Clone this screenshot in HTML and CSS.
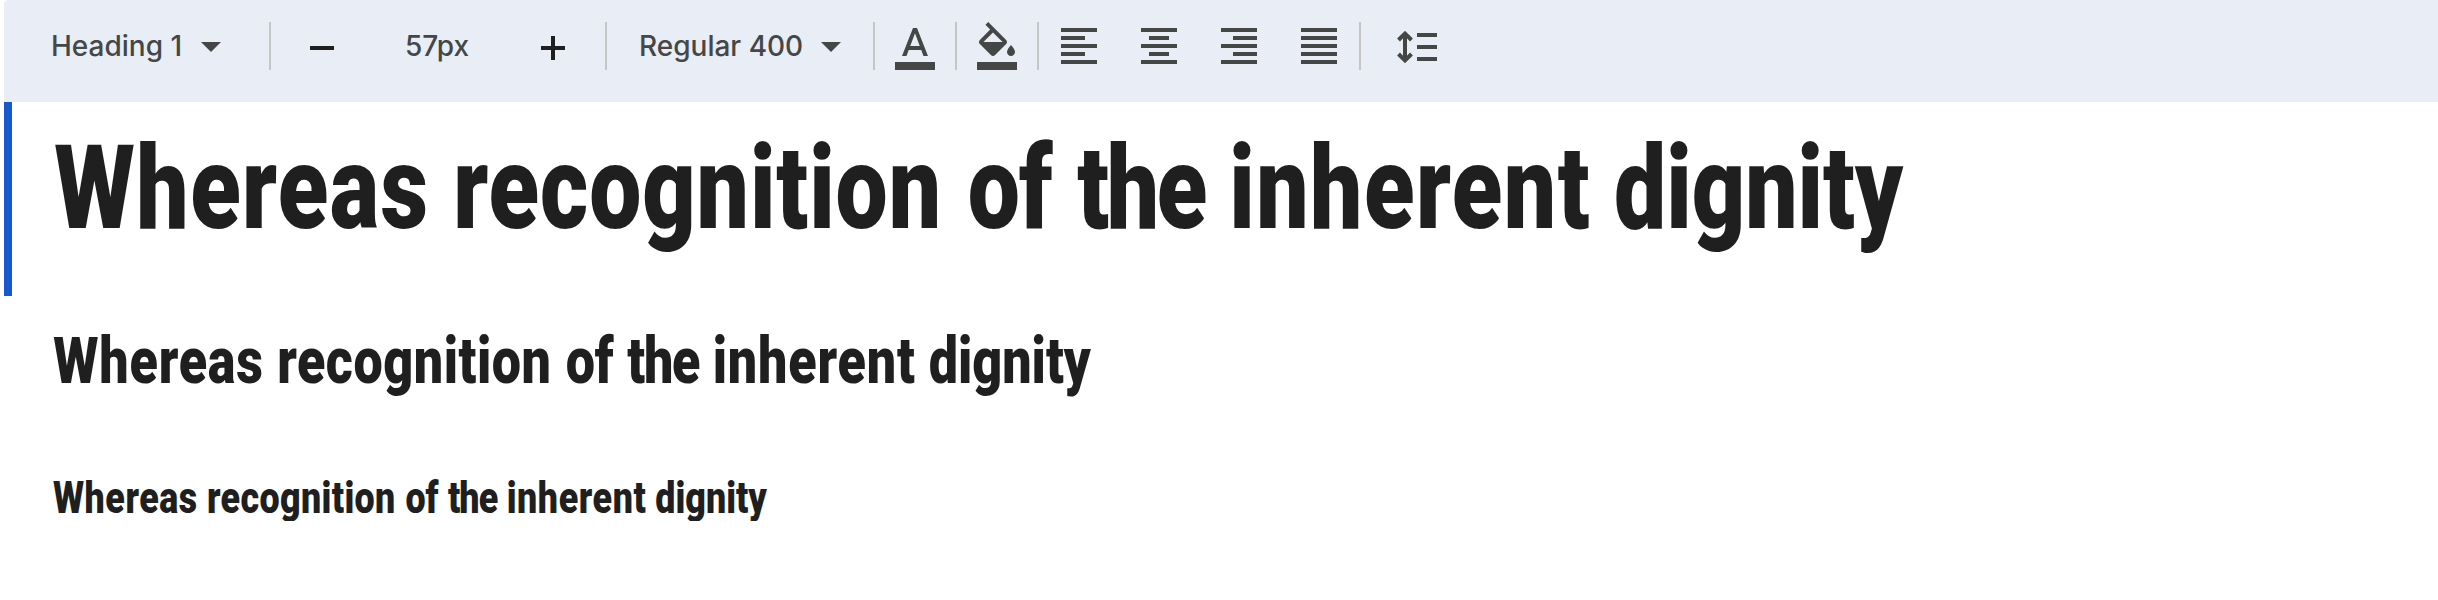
FILE: index.html
```
<!DOCTYPE html>
<html lang="en">
<head>
<meta charset="utf-8">
<title>Type tester</title>
<link rel="stylesheet" href="styles.css">
</head>
<body>
<div class="toolbar">
  <button class="select style-select"><span class="style-label">Heading 1</span><svg class="caret" viewBox="0 0 20 10"><path d="M0 0h20L10 10z"/></svg></button>
  <span class="divider"></span>
  <div class="stepper">
    <button class="step"><svg width="24" height="24" viewBox="0 0 24 24"><path d="M0 10h24v4H0z"/></svg></button>
    <span class="size">57px</span>
    <button class="step"><svg width="24" height="24" viewBox="0 0 24 24"><path d="M0 10h10V0h4v10h10v4H14v10h-4V14H0z"/></svg></button>
  </div>
  <span class="divider"></span>
  <button class="select weight-select"><span class="weight-label">Regular 400</span><svg class="caret" viewBox="0 0 20 10"><path d="M0 0h20L10 10z"/></svg></button>
  <span class="divider"></span>
  <button class="tool"><svg class="icon" viewBox="0 0 24 24"><path d="M2 20h20v4H2z"/><path d="M11 3L5.5 17h2.25l1.12-3h6.25l1.12 3h2.25L13 3h-2zm-1.38 9L12 5.67 14.38 12H9.62z"/></svg></button>
  <span class="divider"></span>
  <button class="tool"><svg class="icon" viewBox="0 0 24 24"><path d="M2 20h20v4H2z"/><path d="M16.56 8.94L7.62 0 6.21 1.41l2.38 2.38-5.15 5.15c-.59.59-.59 1.54 0 2.12l5.5 5.5c.29.29.68.44 1.06.44s.77-.15 1.06-.44l5.5-5.5c.59-.58.59-1.53 0-2.12zM5.21 10L10 5.21 14.79 10H5.21zM19 11.5s-2 2.17-2 3.5c0 1.1.9 2 2 2s2-.9 2-2c0-1.33-2-3.5-2-3.5z"/></svg></button>
  <span class="divider"></span>
  <div class="aligns">
    <button class="plain"><svg class="icon" viewBox="0 0 24 24"><path d="M3 3h18v2H3zM3 7h12v2H3zM3 11h18v2H3zM3 15h12v2H3zM3 19h18v2H3z"/></svg></button>
    <button class="plain"><svg class="icon" viewBox="0 0 24 24"><path d="M3 3h18v2H3zM7 7h10v2H7zM3 11h18v2H3zM7 15h10v2H7zM3 19h18v2H3z"/></svg></button>
    <button class="plain"><svg class="icon" viewBox="0 0 24 24"><path d="M3 3h18v2H3zM9 7h12v2H9zM3 11h18v2H3zM9 15h12v2H9zM3 19h18v2H3z"/></svg></button>
    <button class="plain"><svg class="icon" viewBox="0 0 24 24"><path d="M3 3h18v2H3zM3 7h18v2H3zM3 11h18v2H3zM3 15h18v2H3zM3 19h18v2H3z"/></svg></button>
  </div>
  <span class="divider"></span>
  <button class="plain spacing"><svg width="40" height="32" viewBox="0 0 40 32"><path d="M20 2h20v4H20zM20 14h20v4H20zM20 26h20v4H20zM6 4h4v24H6z"/><path class="chevron" d="M1.5 9L8 2.6 14.5 9M1.5 23L8 29.4 14.5 23"/></svg></button>
</div>
<main>
  <section class="sample large active"><h1 class="line"><span class="w1">Whereas</span> <span class="w2">recognition</span> <span class="w3">of</span> <span class="w4">the</span> <span class="w5">inherent</span> <span class="w6">dignity</span></h1></section>
  <section class="sample medium"><h2 class="line"><span class="w1">Whereas</span> <span class="w2">recognition</span> <span class="w3">of</span> <span class="w4">the</span> <span class="w5">inherent</span> <span class="w6">dignity</span></h2></section>
  <section class="sample small"><h3 class="line"><span class="w1">Whereas</span> <span class="w2">recognition</span> <span class="w3">of</span> <span class="w4">the</span> <span class="w5">inherent</span> <span class="w6">dignity</span></h3></section>
</main>
</body>
</html>
```
FILE: styles.css
```
* { box-sizing: border-box; }
body { margin: 0; background: #fff; color: #1f1f1f; font-family: Inter, "Liberation Sans", sans-serif; overflow: hidden; }
button { margin: 0; padding: 0; border: 0; background: none; color: inherit; font: inherit; letter-spacing: inherit; }
svg { display: block; fill: currentColor; }

.toolbar { display: flex; align-items: center; height: 102px; margin-left: 4px; padding-bottom: 10px; background: #e9edf6; border-top-left-radius: 4px; color: #444746; font-size: 28px; font-weight: 500; line-height: 40px; white-space: nowrap; }
.divider { flex: none; width: 2px; height: 48px; background: #c4c7c5; }
.select { display: flex; align-items: center; text-align: left; }
.style-select { width: 265px; padding-left: 47px; }
.style-label { width: 150px; letter-spacing: 0; }
.weight-select { width: 266px; padding-left: 32px; }
.weight-label { width: 182px; letter-spacing: 0; }
.caret { width: 20px; height: 10px; margin-top: 2px; }
.stepper { display: flex; align-items: center; width: 334px; padding-left: 39px; }
.step { color: #1f1f1f; padding-top: 4px; }
.size { width: 207px; padding-right: 1px; text-align: center; }
.tool { width: 80px; padding: 0 16px; }
.icon { width: 48px; height: 48px; }
.aligns { display: flex; gap: 32px; width: 320px; padding-left: 16px; }
.spacing { padding: 2px 0 0 36px; }
.chevron { fill: none; stroke: currentColor; stroke-width: 4; }

.sample { margin-left: 4px; padding-left: 48px; }
.active { height: 194px; border-left: 8px solid #1558d0; padding-left: 40px; }
.large { padding-top: 28px; font-size: 116px; }
.medium { padding-top: 33px; font-size: 65.1px; }
.small { padding-top: 82px; font-size: 44.8px; }
/* Condensed heavy headline; column widths scale with the font size. */
.line { display: grid; grid-template-columns: 4.299em 5.543em 1.181em 1.638em 4.147em auto; margin: 0; padding-left: 0.025em; font: 900 1em/1 Roboto, "Liberation Sans", sans-serif; white-space: nowrap; transform: scaleX(0.8); transform-origin: 0 0; }
.w1 { letter-spacing: 0.015em; }
.w2 { letter-spacing: 0.01em; }
.w3 { letter-spacing: -0.009em; }
.w4 { letter-spacing: -0.025em; }
.w5 { letter-spacing: 0.016em; }
```
